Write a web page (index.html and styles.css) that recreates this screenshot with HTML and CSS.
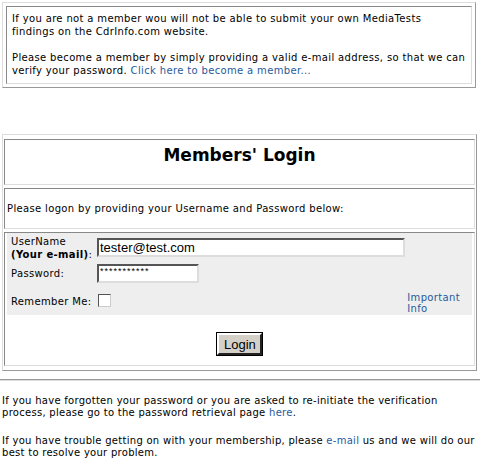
FILE: index.html
```html
<!DOCTYPE html>
<html lang="en">
<head>
    <meta charset="UTF-8">
    <title>Members' Login</title>
    <link rel="stylesheet" href="styles.css">
</head>
<body>
    <table class="notice" cellspacing="0">
        <tr>
            <td class="notice-cell">
                <p>If you are not a member wou will not be able to submit your own MediaTests findings on the CdrInfo.com website.</p>
                <p>Please become a member by simply providing a valid e-mail address, so that we can verify your password. <a href="#">Click here to become a member...</a></p>
            </td>
        </tr>
    </table>

    <table class="login" cellspacing="0">
        <tr>
            <td class="login-title">Members' Login</td>
        </tr>
        <tr>
            <td class="login-intro">Please logon by providing your Username and Password below:</td>
        </tr>
        <tr>
            <td class="login-form">
                <div class="fields">
                    <div class="field-row user-row">
                        <label class="field-label" for="user">UserName<br><b>(Your e-mail)</b>:</label>
                        <input class="input-user" id="user" type="text" value="tester@test.com">
                    </div>
                    <div class="field-row pass-row">
                        <label class="field-label" for="pass">Password:</label>
                        <input class="input-pass" id="pass" type="text" value="***********">
                    </div>
                    <div class="field-row remember-row">
                        <label class="remember-label" for="remember">Remember Me:</label>
                        <span class="checkbox" id="remember"></span>
                        <a class="info-link" href="#">Important<br>Info</a>
                    </div>
                </div>
                <div class="actions">
                    <button class="login-btn" type="button">Login</button>
                </div>
            </td>
        </tr>
    </table>

    <hr class="divider">

    <div class="help">
        <p>If you have forgotten your password or you are asked to re-initiate the verification process, please go to the password retrieval page <a href="#">here</a>.</p>
        <p>If you have trouble getting on with your membership, please <a href="#">e-mail</a> us and we will do our best to resolve your problem.</p>
    </div>
</body>
</html>
```

FILE: styles.css
```css
body {
    margin: 0;
    padding: 2px 2px 0 2px;
    font-family: "DejaVu Sans", Verdana, sans-serif;
    font-size: 10px;
    line-height: 13px;
    letter-spacing: 0.35px;
    color: #000;
    background-color: #fff;
}

a {
    color: #1f5a9c;
    text-decoration: none;
}

p {
    margin: 0;
}

/* top notice box */
.notice {
    width: 474px;
    border: 1px solid;
    border-color: #ddd #999 #999 #ddd;
    padding: 3px;
    border-collapse: separate;
}

.notice-cell {
    border: 1px solid;
    border-color: #888 #ddd #ddd #888;
    padding: 5px 5px 6px 5px;
}

.notice-cell p + p {
    margin-top: 13px;
}

/* login box */
.login {
    width: 475px;
    margin-top: 46px;
    border: 1px solid;
    border-color: #ddd #999 #999 #ddd;
    padding: 1px;
    border-collapse: separate;
    border-spacing: 0 3px;
}

.login td {
    border: 1px solid;
    border-color: #888 #ddd #ddd #888;
}

.login-title {
    height: 46px;
    vertical-align: top;
    text-align: center;
    font-size: 17px;
    font-weight: bold;
    line-height: 20px;
    letter-spacing: 0;
    padding-top: 5px;
    box-sizing: border-box;
}

.login-intro {
    height: 39px;
    padding: 0 2px;
    vertical-align: middle;
}

.login-form {
    padding: 0 2px 0 2px;
}

.fields {
    background-color: #eee;
    padding: 0 4px 1px 4px;
}

.field-row {
    display: flex;
    align-items: center;
}

.user-row .field-label {
    padding-top: 2px;
}

.pass-row {
    margin-top: 3px;
}

.field-label {
    width: 86px;
    flex-shrink: 0;
}

.input-user,
.input-pass {
    font-family: "Liberation Sans", Arial, sans-serif;
    font-size: 13px;
    letter-spacing: 0;
    height: 19px;
    box-sizing: border-box;
    padding: 0 1px;
    border: 2px solid;
    border-color: #555 #ddd #ddd #555;
    background: #fff;
}

.input-user {
    width: 308px;
}

.input-pass {
    width: 102px;
    font-size: 9px;
    letter-spacing: 1px;
    padding-bottom: 6px;
}

.remember-row {
    margin-top: 9px;
    align-items: flex-start;
}

.remember-label {
    padding-top: 3px;
}

.checkbox {
    width: 11px;
    height: 11px;
    margin: 2px 0 0 7px;
    border: 1px solid;
    border-color: #555 #ccc #ccc #555;
    background: #fff;
}

.info-link {
    margin-left: auto;
    margin-right: 8px;
    line-height: 11px;
}

.actions {
    text-align: center;
    padding: 18px 0 10px 0;
}

.login-btn {
    font-family: "Liberation Sans", Arial, sans-serif;
    font-size: 13px;
    padding: 0 5px;
    height: 22px;
    width: 45px;
    background-color: #d4d0c8;
    border: 2px solid;
    border-color: #fff #222 #222 #fff;
    outline: 1px solid #000;
}

.divider {
    margin: 8px 0 0 -2px;
    width: 480px;
    border: 0;
    border-top: 1px solid #999;
    border-bottom: 1px solid #ddd;
}

.help {
    padding: 14px 0 0 0;
    margin-right: -2px;
    line-height: 12px;
    letter-spacing: 0.28px;
}

.help p + p {
    margin-top: 16px;
}
```
